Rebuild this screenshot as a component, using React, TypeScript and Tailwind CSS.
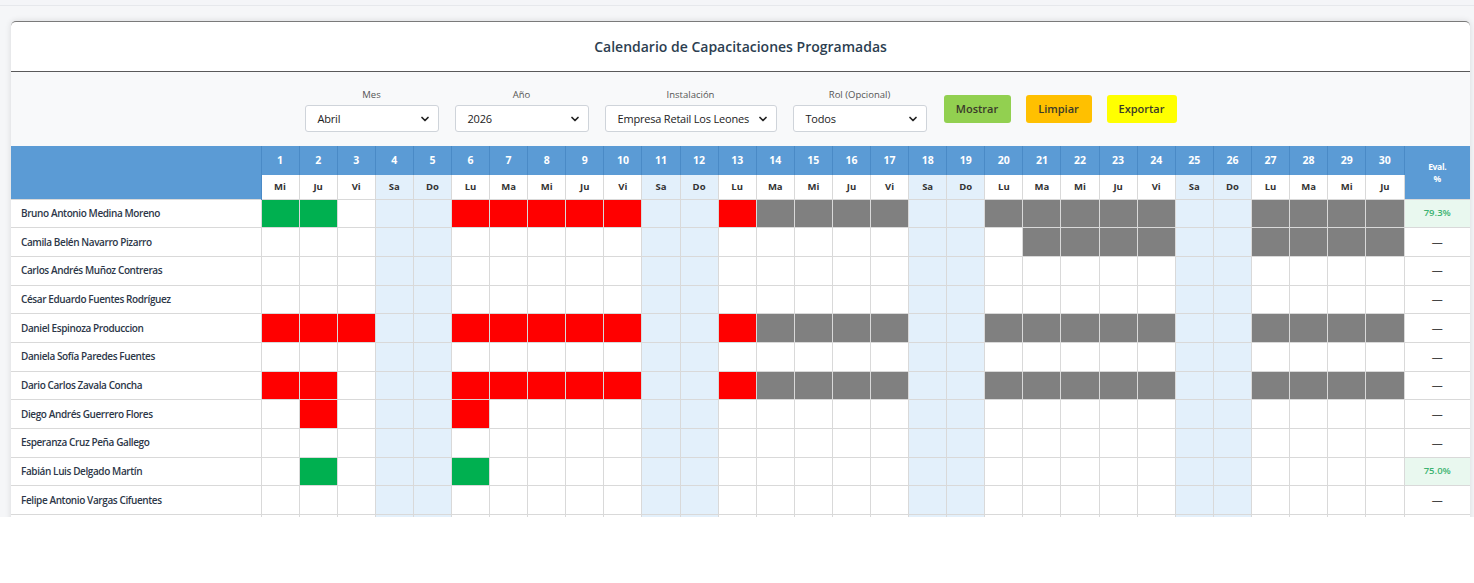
import { ChevronDown } from "lucide-react";

type rowProps = {
  name: string;
  marks: string;
  eval?: string;
};

const dayNames = ["Mi", "Ju", "Vi", "Sa", "Do", "Lu", "Ma"];
const days = Array.from({ length: 30 }, (_, i) => ({
  n: i + 1,
  name: dayNames[i % 7],
  weekend: i % 7 === 3 || i % 7 === 4,
}));

const rows: rowProps[] = [
  { name: "Bruno Antonio Medina Moreno", marks: "GG...RRRRR..RXXXX..XXXXX..XXXX", eval: "79.3%" },
  { name: "Camila Belén Navarro Pizarro", marks: "....................XXXX..XXXX" },
  { name: "Carlos Andrés Muñoz Contreras", marks: ".............................." },
  { name: "César Eduardo Fuentes Rodríguez", marks: ".............................." },
  { name: "Daniel Espinoza Produccion", marks: "RRR..RRRRR..RXXXX..XXXXX..XXXX" },
  { name: "Daniela Sofía Paredes Fuentes", marks: ".............................." },
  { name: "Dario Carlos Zavala Concha", marks: "RR...RRRRR..RXXXX..XXXXX..XXXX" },
  { name: "Diego Andrés Guerrero Flores", marks: ".R...R........................" },
  { name: "Esperanza Cruz Peña Gallego", marks: ".............................." },
  { name: "Fabián Luis Delgado Martín", marks: ".G...G........................", eval: "75.0%" },
  { name: "Felipe Antonio Vargas Cifuentes", marks: ".............................." },
];

function cellClass(mark: string, weekend: boolean): string {
  if (mark === "G") return "bg-[#00b050]";
  if (mark === "R") return "bg-[#ff0000]";
  if (mark === "X") return "bg-[#808080]";
  return weekend ? "bg-[#e3f0fb]" : "bg-white";
}

function Select({ label, value, width }: { label: string; value: string; width: string }) {
  return (
    <div className="flex flex-col items-center gap-[3px]">
      <span className="text-[9.5px] text-[#555]">{label}</span>
      <div
        className={`${width} h-[27px] flex items-center justify-between bg-white border border-[#cfd4da] rounded-[3px] pl-3 pr-[7px] text-[11px] text-[#222] tracking-[-0.2px]`}
      >
        <span>{value}</span>
        <ChevronDown size={12} strokeWidth={3.5} className="text-[#222]" />
      </div>
    </div>
  );
}

export default function App() {
  return (
    <div
      className="h-[517px] overflow-hidden bg-[#f5f6f8]"
      style={{ fontFamily: "'Open Sans', 'Noto Sans', sans-serif" }}
    >
      <div className="h-[6px] border-b border-[#e6e8ec] bg-[#f4f5f8]"></div>
      <div className="pt-[15px] pl-[11px] pr-[4px]">
        <div className="bg-white border-t border-[#7a7a7a] rounded-t-[5px] shadow-[0_0_6px_rgba(0,0,0,0.12)]">
          <div className="h-[50px] flex items-center justify-center border-b border-[#5a5a5a]">
            <h1 className="text-[14px] font-semibold text-[#2c3e50]">
              Calendario de Capacitaciones Programadas
            </h1>
          </div>

          <div className="h-[74px] bg-[#f8f9fa] flex items-start justify-center gap-4 pt-[16px]">
            <Select label="Mes" value="Abril" width="w-[134px]" />
            <Select label="Año" value="2026" width="w-[134px]" />
            <Select label="Instalación" value="Empresa Retail Los Leones" width="w-[172px]" />
            <Select label="Rol (Opcional)" value="Todos" width="w-[134px]" />
            <div className="flex gap-[15px] pt-[7px] pl-px">
              <button className="w-[67px] h-[28px] rounded-[3px] bg-[#92d050] text-[11px] font-semibold text-[#3a3a2a]">
                Mostrar
              </button>
              <button className="w-[66px] h-[28px] rounded-[3px] bg-[#ffc000] text-[11px] font-semibold text-[#3a3a2a]">
                Limpiar
              </button>
              <button className="w-[70px] h-[28px] rounded-[3px] bg-[#ffff00] text-[11px] font-semibold text-[#3a3a2a]">
                Exportar
              </button>
            </div>
          </div>

          <table className="w-full table-fixed border-collapse">
            <colgroup>
              <col className="w-[250px]" />
              {days.map((d) => (
                <col key={d.n} />
              ))}
              <col className="w-[66px]" />
            </colgroup>
            <thead>
              <tr className="h-[29px]">
                <th rowSpan={2} className="bg-[#5b9bd5] border-r border-[#4a8ac6]"></th>
                {days.map((d) => (
                  <th
                    key={d.n}
                    className="bg-[#5b9bd5] border-r border-[#4a8ac6] text-[10.5px] font-bold text-white"
                  >
                    {d.n}
                  </th>
                ))}
                <th
                  rowSpan={2}
                  className="bg-[#5b9bd5] text-[8.5px] font-bold text-white leading-[12px] pt-[2px] tracking-[-0.3px]"
                >
                  Eval.
                  <br />%
                </th>
              </tr>
              <tr className="h-[24px]">
                {days.map((d) => (
                  <th
                    key={d.n}
                    className={`border border-[#d9d9d9] border-t-0 text-[9.5px] font-bold text-[#333] ${
                      d.weekend ? "bg-[#e3f0fb]" : "bg-white"
                    }`}
                  >
                    {d.name}
                  </th>
                ))}
              </tr>
            </thead>
            <tbody>
              {rows.map((r) => (
                <tr key={r.name} className="h-[28.7px]">
                  <td className="border border-[#d9d9d9] border-l-0 bg-white pl-[10px] text-[10px] font-semibold text-[#2d3748] whitespace-nowrap tracking-[-0.4px]">
                    {r.name}
                  </td>
                  {days.map((d, i) => (
                    <td
                      key={d.n}
                      className={`border border-[#d9d9d9] ${cellClass(r.marks[i], d.weekend)}`}
                    ></td>
                  ))}
                  <td
                    className={`border border-[#d9d9d9] border-r-0 text-center ${
                      r.eval
                        ? "bg-[#e9f8ef] text-[#3cb371] text-[9.5px] font-semibold"
                        : "bg-white text-[#444] text-[11px]"
                    }`}
                  >
                    {r.eval ?? "—"}
                  </td>
                </tr>
              ))}
              <tr className="h-[28.7px]">
                <td className="border border-[#d9d9d9] border-l-0 bg-white"></td>
                {days.map((d) => (
                  <td key={d.n} className={`border border-[#d9d9d9] ${cellClass(".", d.weekend)}`}></td>
                ))}
                <td className="border border-[#d9d9d9] border-r-0 bg-white"></td>
              </tr>
            </tbody>
          </table>
        </div>
      </div>
    </div>
  );
}
